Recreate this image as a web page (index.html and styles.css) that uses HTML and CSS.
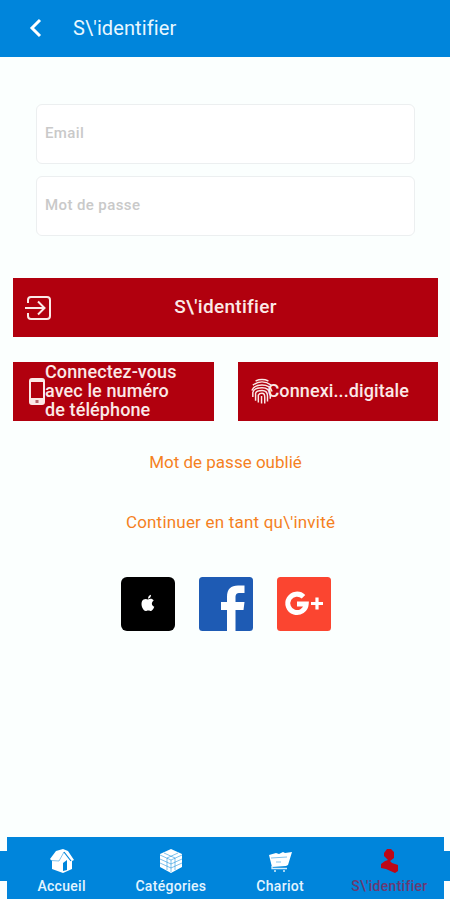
FILE: index.html
```
<!DOCTYPE html>
<html lang="fr">
<head>
    <meta charset="UTF-8">
    <meta name="viewport" content="width=device-width, initial-scale=1.0">
    <title>S'identifier</title>
    <link rel="stylesheet" href="styles.css">
</head>
<body>
    <header>
        <svg class="back" viewBox="0 0 14 20"><path d="M11 2 3 10l8 8"/></svg>
        <h1>S\'identifier</h1>
    </header>
    <main>
        <form class="fields">
            <input type="text" placeholder="Email">
            <input type="password" placeholder="Mot de passe">
        </form>
        <button class="btn login">
            <svg class="icon-login" viewBox="0 0 28 26">
                <path d="M4 8V5q0-3 3-3h16q3 0 3 3v16q0 3-3 3H7q-3 0-3-3v-3M1 13h19M14 6.500l6.500 6.500-6.500 6.500"/>
            </svg>
            <span>S\'identifier</span>
        </button>
        <div class="row">
            <button class="btn phone">
                <svg class="icon-phone" viewBox="0 0 16 27">
                    <path fill="#fbe9e7" fill-rule="evenodd" d="M3 0h10q3 0 3 3v21q0 3-3 3H3q-3 0-3-3V3q0-3 3-3zM2 4v16h12V4z"/>
                    <rect x="6.500" y="22" width="3" height="3" fill="#b5656b"/>
                </svg>
                <span>Connectez-vous<br>avec le numéro<br>de téléphone</span>
            </button>
            <button class="btn finger">
                <svg class="icon-finger" viewBox="0 0 24 28">
                    <path d="M5 2.500q7-3 14 0M2 7q10-7 20 0M1 13q2-6 11-6t11 7M2 20v-5q1-5 10-5 8 0 9 7v5M5 24v-8q1-3 7-3 6 0 6 6v6M8 26v-8q1-2 4-2 3 0 3 4v7M11.500 27v-8"/>
                </svg>
                <span>Connexi...digitale</span>
            </button>
        </div>
        <a class="link forgot">Mot de passe oublié</a>
        <a class="link guest">Continuer en tant qu\'invité</a>
        <div class="social">
            <svg viewBox="0 0 54 54">
                <rect width="54" height="54" rx="6" fill="#000"/>
                <path fill="#fff" d="M27 22.500c2-1 4.500-1 5.700 1-2.700 2-2.300 5 .6 6.300-1 2.700-2.600 4.500-4 4.200-1.500-.6-2.500-.6-4 0-3 .8-6-6-4.300-9.700 1-2.300 3.800-2.900 6-1.800zM27 21.700c0-2.200 1.300-3.600 3-4 .1 2.200-1.200 3.800-3 4z"/>
            </svg>
            <svg viewBox="0 0 54 54">
                <rect width="54" height="54" rx="3.500" fill="#1e5bb4"/>
                <path fill="#fff" d="M28 54V33h-6v-8h6v-5c0-8 4-11.500 11-11.500h6.500V16H41c-3.500 0-4.500 1.300-4.500 4.500V25h9l-1 8h-8v21z"/>
            </svg>
            <svg viewBox="0 0 54 54">
                <rect width="54" height="54" rx="3.500" fill="#fb4530"/>
                <path fill="none" stroke="#fff" stroke-width="5" d="M26.500 19.800A9.200 9.200 0 1 0 29.200 27H20"/>
                <path fill="none" stroke="#fff" stroke-width="3.200" d="M40 20.500v12M34 26.500h12"/>
            </svg>
        </div>
    </main>
    <nav>
        <div class="tabs">
            <a class="tab">
                <svg viewBox="0 0 24 24">
                    <path fill="#fff" d="M0 10 6 2l7-2 5 2 6 9-2 1v8l-9 4-11-4v-8z"/>
                    <path class="cut thin" d="M1 11.500l8 .5 5-9"/>
                    <path class="cut" d="M14 3l7 9"/>
                    <path fill="#0085db" d="M13 22v-8l4-3v10z"/>
                </svg>
                <span>Accueil</span>
            </a>
            <a class="tab">
                <svg viewBox="0 0 24 24">
                    <path fill="#fff" d="M12 0l11 5v13l-11 6-11-6V5z"/>
                    <path class="cut thin" d="M1 6l11 5 11-5M12 11v12M1 10l11 5 11-5M1 14l11 5 11-5M5 4l11 5v12M19 4 8 9v12"/>
                </svg>
                <span>Catégories</span>
            </a>
            <a class="tab">
                <svg viewBox="0 0 24 24">
                    <path fill="#fff" d="M1 6l7-2 3 1 4-2 2 1 7-1-4 13-2 1-14 1z"/>
                    <path fill="none" stroke="#d5eefc" stroke-width="1.300" d="M4 17v2.500h15M6 22h2M15 22h2"/>
                    <path class="cut thin" d="M3 9l16-1M8 13h5"/>
                </svg>
                <span>Chariot</span>
            </a>
            <a class="tab active">
                <svg viewBox="0 0 24 24">
                    <path fill="#bd0716" d="M10 0l4 0 3 3v6l-4 3 2 2 6 2v6l-3 2-9-4-5-1v-4l4-3 3-1-4-4V4z"/>
                </svg>
                <span>S\'identifier</span>
            </a>
        </div>
    </nav>
</body>
</html>
```

FILE: styles.css
```
* {
    box-sizing: border-box;
}
body {
    margin: 0;
    height: 900px;
    display: flex;
    flex-direction: column;
    overflow: hidden;
    background-color: #fbfffe;
    font-family: Roboto, "Liberation Sans", sans-serif;
}
header {
    height: 57px;
    display: flex;
    align-items: center;
    padding: 0 0 1px 29px;
    background-color: #0085db;
    color: #e8f7ff;
}
.back {
    width: 14px;
    height: 20px;
    margin-right: 30px;
    fill: none;
    stroke: #fff;
    stroke-width: 3;
}
h1 {
    margin: 0;
    font-size: 20px;
    font-weight: 400;
    letter-spacing: 0.1px;
}
main {
    flex: 1;
    display: flex;
    flex-direction: column;
    align-items: center;
    padding: 47px 12px 0 13px;
}
.fields {
    width: 379px;
    display: flex;
    flex-direction: column;
    gap: 12px;
}
.fields input {
    height: 60px;
    padding: 0 8px 2px;
    border: 1px solid #eceff0;
    border-radius: 6px;
    background-color: #fff;
    font: 500 15px Roboto, sans-serif;
    letter-spacing: 0.4px;
}
.fields input::placeholder {
    color: #c9c9c9;
}
.btn {
    height: 59px;
    padding: 0;
    display: flex;
    align-items: center;
    border: 0;
    background-color: #b1000e;
    color: #fbe9e7;
    font: 500 18px/19px Roboto, sans-serif;
    letter-spacing: 0.1px;
    text-align: left;
    white-space: nowrap;
}
.login {
    width: 425px;
    margin-top: 42px;
    padding-left: 11px;
    font-size: 19px;
    letter-spacing: 0.3px;
}
.login span {
    flex: 1;
    padding: 0 39px 2px 0;
    text-align: center;
}
.btn svg {
    flex: none;
    fill: none;
    stroke: #fbe9e7;
}
.icon-login {
    width: 28px;
    height: 26px;
    stroke-width: 2;
}
.row {
    width: 425px;
    display: grid;
    grid-template-columns: 1fr 1fr;
    gap: 24px;
    margin-top: 25px;
}
.phone {
    padding: 0 0 3px 16px;
}
.btn .icon-phone {
    width: 16px;
    height: 27px;
    margin-top: 2px;
    stroke: none;
}
.finger {
    padding: 0 0 2px 13px;
}
.icon-finger {
    width: 22px;
    height: 27px;
    margin: 2px -5px 0 0;
    stroke-width: 1.6;
}
.link {
    color: #f5811f;
    font-size: 17px;
    line-height: 20px;
}
.forgot {
    margin-top: 31px;
}
.guest {
    margin-top: 40px;
    padding-left: 10px;
    letter-spacing: 0.2px;
}
.social {
    display: flex;
    gap: 24px;
    margin-top: 45px;
}
.social svg {
    width: 54px;
    height: 54px;
}
nav {
    height: 63px;
    padding: 0 6px 0 7px;
    background: linear-gradient(#0085db, #0085db) 0 14px / 100% 30px no-repeat;
}
.tabs {
    height: 62px;
    display: grid;
    grid-template-columns: repeat(4, 1fr);
    background-color: #0085db;
}
.tab {
    display: flex;
    flex-direction: column;
    align-items: center;
    padding-top: 12px;
    color: #e3f4ff;
    font-size: 14px;
    font-weight: 500;
    line-height: 26px;
    letter-spacing: 0.3px;
}
.tab svg {
    width: 24px;
    height: 24px;
}
.tab .cut {
    fill: none;
    stroke: #0085db;
    stroke-width: 1.2;
}
.tab .thin {
    stroke-width: 0.5;
}
.active {
    color: #6b3a72;
}
```
